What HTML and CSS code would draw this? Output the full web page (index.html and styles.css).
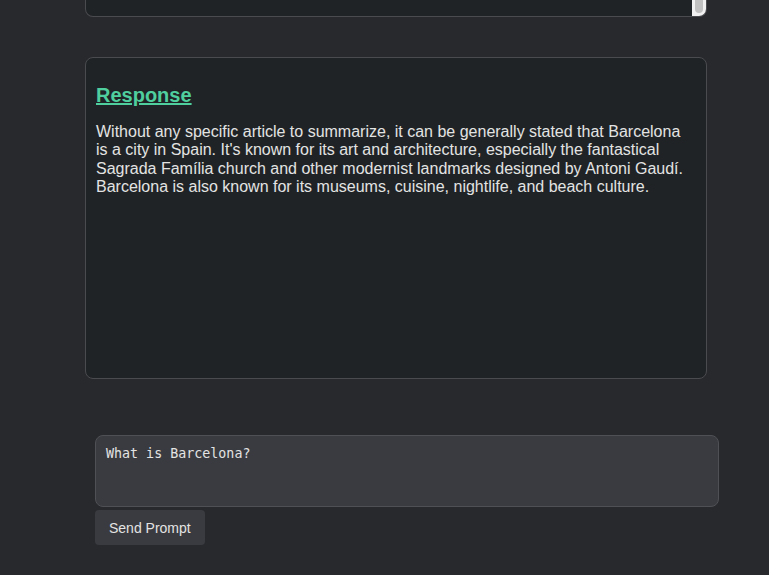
FILE: index.html
```html
<!DOCTYPE html>
<html lang="en">
<head>
<meta charset="utf-8">
<title>Response</title>
<link rel="stylesheet" href="styles.css">
</head>
<body>
<div class="page">
  <div class="article-box">
    <div class="fake-scroll"><div class="thumb"></div></div>
  </div>
  <section class="response-box">
    <h2 class="response-title">Response</h2>
    <p class="response-text">Without any specific article to summarize, it can be generally stated that Barcelona is a city in Spain. It's known for its art and architecture, especially the fantastical Sagrada Família church and other modernist landmarks designed by Antoni Gaudí. Barcelona is also known for its museums, cuisine, nightlife, and beach culture.</p>
  </section>
  <div class="prompt-area">
    <textarea class="prompt-input">What is Barcelona?</textarea>
    <button class="send-btn">Send Prompt</button>
  </div>
</div>
</body>
</html>
```

FILE: styles.css
```css
html, body {
  margin: 0;
  padding: 0;
  background: #28292d;
  font-family: "Liberation Sans", Arial, sans-serif;
  color: #e3e3e3;
}
.page {
  display: flex;
  flex-direction: column;
  padding-left: 85px;
}
.article-box {
  width: 620px;
  height: 16px;
  background: #202326;
  border: 1px solid #4a4b4f;
  border-top: none;
  border-radius: 0 0 8px 8px;
  display: flex;
  justify-content: flex-end;
  overflow: hidden;
}
.fake-scroll {
  width: 14px;
  height: 16px;
  background: #f1f1f1;
  display: flex;
  justify-content: center;
}
.thumb {
  width: 8px;
  height: 13px;
  background: #c1c1c1;
  border-radius: 0 0 4px 4px;
}
.response-box {
  margin-top: 40px;
  width: 600px;
  height: 300px;
  padding: 10px;
  background: #202326;
  border: 1px solid #4a4b4f;
  border-radius: 8px;
}
.response-title {
  margin: 16px 0 0;
  font-size: 20px;
  line-height: 23px;
  font-weight: bold;
  color: #4fce9e;
  text-decoration: underline;
}
.response-text {
  margin: 16px 0 0;
  font-size: 16px;
  line-height: 18.4px;
  color: #e3e3e3;
}
.prompt-area {
  margin-top: 56px;
  padding-left: 10px;
  display: flex;
  flex-direction: column;
  align-items: flex-start;
  gap: 3px;
}
.prompt-input {
  box-sizing: border-box;
  width: 624px;
  height: 72px;
  padding: 10px 10px;
  background: #3a3b40;
  border: 1px solid #4f5055;
  border-radius: 8px;
  color: #e3e3e3;
  font-family: "DejaVu Sans Mono", monospace;
  font-size: 13.333px;
  resize: none;
  outline: none;
}
.send-btn {
  height: 35px;
  padding: 0 14px;
  background: #3a3b40;
  border: none;
  border-radius: 4px;
  color: #e3e3e3;
  font-family: "Liberation Sans", Arial, sans-serif;
  font-size: 14px;
}
```
